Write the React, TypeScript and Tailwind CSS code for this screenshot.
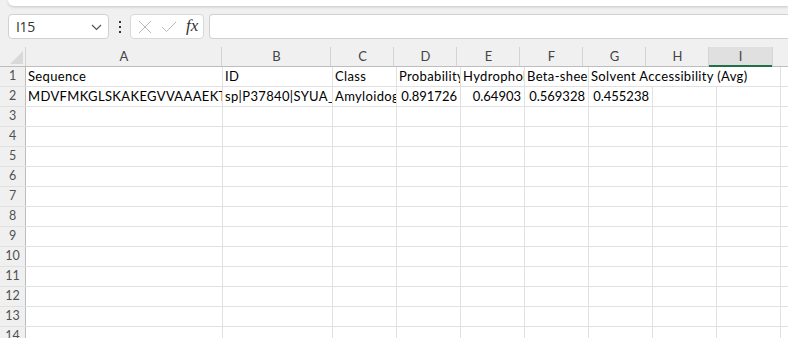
import React from "react";

const SEQ =
  "MDVFMKGLSKAKEGVVAAAEKTKQGVAEAAGKTKEGVLYVGSKTKEGVVHGVATVAEKTKEQVTNVGGAVVTGVTAVAQKTVEGAGSIAAATGFVKKDQLGKNEEGAPQEGILEDMPVDPDNEAYEMPSEEGYQDYEPEA";

const cols = [
  { l: "A", w: "w-[197px]" },
  { l: "B", w: "w-[110px]" },
  { l: "C", w: "w-[64px]" },
  { l: "D", w: "w-[64px]" },
  { l: "E", w: "w-[64px]" },
  { l: "F", w: "w-[64px]" },
  { l: "G", w: "w-[64px]" },
  { l: "H", w: "w-[64px]" },
  { l: "I", w: "w-[64px]" },
];

function Cell({
  w,
  children,
  right,
}: {
  w: string;
  children?: React.ReactNode;
  right?: boolean;
}) {
  return (
    <div
      className={`${w} shrink-0 h-full border-r border-[#e1e1e1] overflow-hidden whitespace-nowrap flex items-end pb-[2px] leading-[16px] ${
        right ? "justify-end pr-[3px]" : "pl-[2px] tracking-[0.35px]"
      }`}
    >
      {children}
    </div>
  );
}

function RowHead({ n }: { n: number }) {
  return (
    <div className="w-[26px] shrink-0 h-full bg-[#f0f0f0] border-r border-[#bdbdbd] flex items-end justify-center pb-[3px] leading-[14px] text-[#505050] text-[12.5px]">
      {n}
    </div>
  );
}

export default function App() {
  const rows = Array.from({ length: 14 }, (_, i) => i + 1);
  return (
    <div className="w-[788px] h-[338px] overflow-hidden bg-[#f0f0f0] font-['Lato',sans-serif] text-black">
      {/* top card */}
      <div className="h-[6px] ml-[8px] bg-white rounded-bl-[8px] shadow-[0_1px_3px_rgba(0,0,0,0.18)]" />
      {/* formula bar */}
      <div className="flex items-center mt-[8px] h-[25px]">
        <div className="ml-[8px] w-[101px] h-[25px] bg-white border border-[#d1d1d1] rounded-[4px] flex items-center pl-[7px] pr-[6px] justify-between">
          <span className="text-[14px] text-[#333] font-['Open_Sans',sans-serif] tracking-[-0.3px]">I15</span>
          <svg width="11" height="7" viewBox="0 0 11 7" className="mt-[1px]">
            <path d="M1 1 L5.5 5.5 L10 1" fill="none" stroke="#555" strokeWidth="1.2" />
          </svg>
        </div>
        <div className="w-[21px] flex flex-col items-center justify-center gap-[3px]">
          <div className="w-[2px] h-[2px] bg-[#333]" />
          <div className="w-[2px] h-[2px] bg-[#333]" />
          <div className="w-[2px] h-[2px] bg-[#333]" />
        </div>
        <div className="w-[74px] h-[25px] bg-white border border-[#d8d8d8] rounded-[4px] flex items-center pl-[6px]">
          <svg width="14" height="14" viewBox="0 0 14 14" className="ml-[1px]">
            <path d="M1 1 L13 13 M13 1 L1 13" stroke="#b8b8b8" strokeWidth="1" fill="none" />
          </svg>
          <svg width="16" height="12" viewBox="0 0 16 12" className="ml-[9px]">
            <path d="M1 6 L5.5 10.5 L15 1" stroke="#b8b8b8" strokeWidth="1" fill="none" />
          </svg>
          <span className="ml-[9px] font-['Liberation_Serif',serif] italic text-[17px] text-[#333] leading-none -mt-[2px]">
            fx
          </span>
        </div>
        <div className="ml-[5px] flex-1 h-[25px] bg-white border border-r-0 border-[#d1d1d1] rounded-l-[4px]" />
      </div>
      {/* column header */}
      <div className="flex h-[20px] mt-[8px] border-b border-[#bdbdbd] text-[13px] text-[#444]">
        <div className="w-[26px] shrink-0 h-full relative">
          <svg width="13" height="13" viewBox="0 0 13 13" className="absolute right-[3px] bottom-[2px]">
            <path d="M13 0 L13 13 L0 13 Z" fill="#d9d9d9" />
          </svg>
        </div>
        {cols.map((c) => (
          <div
            key={c.l}
            className={`${c.w} shrink-0 h-full border-l border-[#d4d4d4] -ml-[1px] first:ml-0 flex items-center justify-center relative ${
              c.l === "I" ? "bg-[#e0e0e0]" : ""
            }`}
          >
            <span className="mt-[1px]">{c.l}</span>
            {c.l === "I" && (
              <div className="absolute left-0 right-0 bottom-[-1px] h-[2px] bg-[#1e7145]" />
            )}
          </div>
        ))}
        <div className="flex-1 border-l border-[#d4d4d4]" />
      </div>
      {/* grid */}
      <div className="bg-white text-[13px]">
        {rows.map((r) => (
          <div key={r} className="flex h-[20px] border-b border-[#e1e1e1]">
            <RowHead n={r} />
            {r === 1 ? (
              <>
                <Cell w="w-[197px]">Sequence</Cell>
                <Cell w="w-[110px]">ID</Cell>
                <Cell w="w-[64px]">Class</Cell>
                <Cell w="w-[64px]">Probability</Cell>
                <Cell w="w-[64px]">Hydrophobicity</Cell>
                <Cell w="w-[64px]">Beta-sheet</Cell>
                <Cell w="w-[192px]">Solvent Accessibility (Avg)</Cell>
              </>
            ) : r === 2 ? (
              <>
                <Cell w="w-[197px]">{SEQ}</Cell>
                <Cell w="w-[110px]">sp|P37840|SYUA_HUMAN</Cell>
                <Cell w="w-[64px]">Amyloidogenic</Cell>
                <Cell w="w-[64px]" right>0.891726</Cell>
                <Cell w="w-[64px]" right>0.64903</Cell>
                <Cell w="w-[64px]" right>0.569328</Cell>
                <Cell w="w-[64px]" right>0.455238</Cell>
                <Cell w="w-[64px]" />
                <Cell w="w-[64px]" />
              </>
            ) : (
              cols.map((c) => <Cell key={c.l} w={c.w} />)
            )}
            <div className="flex-1" />
          </div>
        ))}
      </div>
    </div>
  );
}
